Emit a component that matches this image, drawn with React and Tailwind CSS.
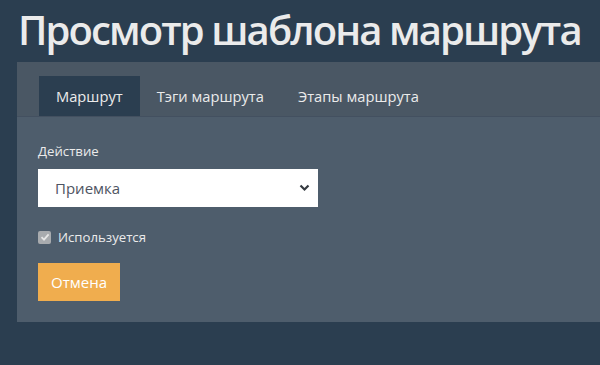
export default function App() {
  return (
    <div className="min-h-[365px] w-[600px] overflow-hidden bg-[#2b3e50] font-['Open_Sans',sans-serif]">
      <h1 className="h-[62px] pl-[18px] pt-[6px] text-[40px] font-semibold leading-[48px] tracking-[-1.9px] text-[#ebebeb] whitespace-nowrap">
        Просмотр шаблона маршрута
      </h1>
      <div className="ml-[17px] bg-[#4e5d6c]">
        <div className="flex border-b border-[#435060] bg-[#4a5764] pl-[22px] pt-[14px] text-[14.7px] text-[#ebebeb]">
          <div className="flex h-[40px] items-center bg-[#2b3e50] px-[17px]">Маршрут</div>
          <div className="flex h-[40px] items-center px-[17px]">Тэги маршрута</div>
          <div className="flex h-[40px] items-center px-[17px]">Этапы маршрута</div>
        </div>
        <div className="px-[21px] pb-[21px] pt-[24px]">
          <div className="mb-[8px] text-[13.2px] leading-[20px] text-[#ebebeb]">Действие</div>
          <div className="relative h-[38px] w-[280px] bg-white">
            <div className="flex h-full items-center pl-[17px] text-[15px] text-[#4e5462]">Приемка</div>
            <svg className="absolute right-[8px] top-[15px]" width="11" height="8" viewBox="0 0 11 8">
              <path d="M1.5 1.5 L5.5 5.5 L9.5 1.5" stroke="#343a40" strokeWidth="2.2" fill="none" />
            </svg>
          </div>
          <div className="mt-[20px] flex items-center gap-[7px] text-[13.2px] leading-[20px] text-[#ebebeb]">
            <span className="flex h-[13px] w-[13px] items-center justify-center rounded-[2px] bg-[#a8abae]">
              <svg width="10" height="10" viewBox="0 0 10 10">
                <path d="M1.5 5.2 L4 7.6 L8.6 2.4" stroke="#e6e6e6" strokeWidth="1.8" fill="none" />
              </svg>
            </span>
            Используется
          </div>
          <div className="mt-[16px] flex h-[38px] w-[82px] items-center justify-center bg-[#f0ad4e] text-[15px] text-white">
            Отмена
          </div>
        </div>
      </div>
    </div>
  );
}
